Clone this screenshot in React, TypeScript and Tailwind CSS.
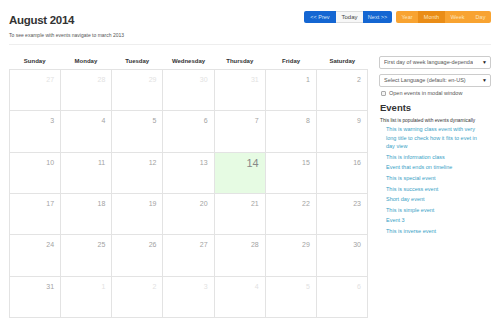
const FONT = { fontFamily: '"Liberation Sans", Arial, sans-serif' };

const days = ["Sunday", "Monday", "Tuesday", "Wednesday", "Thursday", "Friday", "Saturday"];

type Cell = { n: number; out?: boolean; today?: boolean };

const weeks: Cell[][] = [
  [{ n: 27, out: true }, { n: 28, out: true }, { n: 29, out: true }, { n: 30, out: true }, { n: 31, out: true }, { n: 1 }, { n: 2 }],
  [{ n: 3 }, { n: 4 }, { n: 5 }, { n: 6 }, { n: 7 }, { n: 8 }, { n: 9 }],
  [{ n: 10 }, { n: 11 }, { n: 12 }, { n: 13 }, { n: 14, today: true }, { n: 15 }, { n: 16 }],
  [{ n: 17 }, { n: 18 }, { n: 19 }, { n: 20 }, { n: 21 }, { n: 22 }, { n: 23 }],
  [{ n: 24 }, { n: 25 }, { n: 26 }, { n: 27 }, { n: 28 }, { n: 29 }, { n: 30 }],
  [{ n: 31 }, { n: 1, out: true }, { n: 2, out: true }, { n: 3, out: true }, { n: 4, out: true }, { n: 5, out: true }, { n: 6, out: true }],
];

const events = [
  "This is warning class event with very long title to check how it fits to evet in day view",
  "This is information class",
  "Event that ends on timeline",
  "This is special event",
  "This is success event",
  "Short day event",
  "This is simple event",
  "Event 3",
  "This is inverse event",
];

export default function App() {
  return (
    <div className="h-[332px] w-[500px] overflow-hidden bg-white pl-[9px] pr-[9px] text-[#333]" style={FONT}>
      <div className="flex items-start justify-between pt-[11px]">
        <h3 className="mt-[2px] text-[11.5px] font-bold leading-[14px] tracking-[-0.3px]">August 2014</h3>
        <div className="flex gap-[4px]">
          <Nav />
          <Views />
        </div>
      </div>
      <p className="mt-[5px] text-[5px] leading-[6px] text-[#555]">
        To see example with events navigate to march 2013
      </p>
      <div className="mt-[6px] h-px w-[482px] bg-[#eee]" />

      <div className="mt-[9px] flex gap-[11px]">
        <Calendar />
        <Sidebar />
      </div>
    </div>
  );
}

function Nav() {
  return (
    <div className="flex h-[12px] text-[5.5px] leading-[12px]">
      <span className="w-[32px] rounded-l-[2px] bg-[#1466d2] text-center text-[#dbe8fa]">&lt;&lt; Prev</span>
      <span className="w-[27px] border-y border-[#ddd] bg-[#f7f7f7] text-center text-[6px] leading-[10px] text-[#444]">Today</span>
      <span className="w-[29px] rounded-r-[2px] bg-[#1466d2] text-center text-[#dbe8fa]">Next &gt;&gt;</span>
    </div>
  );
}

function Views() {
  return (
    <div className="flex h-[12px] text-[5.5px] leading-[12px] text-[#fde4bd]">
      <span className="w-[22px] rounded-l-[2px] bg-[#f8a331] text-center">Year</span>
      <span className="w-[27px] bg-[#ea8d17] text-center">Month</span>
      <span className="w-[25px] bg-[#f8a331] text-center">Week</span>
      <span className="w-[21px] rounded-r-[2px] bg-[#f8a331] text-center">Day</span>
    </div>
  );
}

function Calendar() {
  return (
    <div className="w-[359px]">
      <div className="grid h-[15px] grid-cols-7 text-center text-[6px] font-bold leading-[15px]">
        {days.map((d) => (
          <span key={d}>{d}</span>
        ))}
      </div>
      <div className="grid h-[249px] grid-rows-6 border-l border-t border-[#e3e3e3]">
        {weeks.map((w, i) => (
          <div key={i} className="grid grid-cols-7">
            {w.map((c, j) => (
              <div
                key={j}
                className={
                  "border-b border-r border-[#e3e3e3] pr-[6px] text-right " +
                  (c.today ? "bg-[#e6fbe3] pt-[4px] text-[11px] leading-[12px] text-[#888]" : "pt-[6px] text-[7px] leading-[8px]") +
                  (c.out ? " text-[#e2e2e2]" : c.today ? "" : " text-[#a3a3a3]")
                }
              >
                {c.n}
              </div>
            ))}
          </div>
        ))}
      </div>
    </div>
  );
}

function Select({ label }: { label: string }) {
  return (
    <div className="flex h-[13px] w-[112px] items-center justify-between rounded-[2px] border border-[#ccc] pl-[4px] pr-[3px] text-[5.5px] text-[#555]">
      <span className="truncate">{label}</span>
      <span className="text-[5px] text-[#222]">▼</span>
    </div>
  );
}

function Sidebar() {
  return (
    <div className="w-[112px] pt-[2px]">
      <Select label="First day of week language-dependa" />
      <div className="mt-[5px]">
        <Select label="Select Language (default: en-US)" />
      </div>
      <label className="mt-[2px] flex items-center gap-[3px] pl-[2px] text-[5.5px] leading-[8px] text-[#555]">
        <span className="h-[5px] w-[5px] rounded-[1px] border border-[#aaa] bg-[#f4f4f4]" />
        Open events in modal window
      </label>
      <h4 className="mt-[5px] pl-[1px] text-[9.5px] font-bold leading-[12px] text-[#333]">Events</h4>
      <p className="mt-[3px] pl-[1px] text-[4.8px] leading-[7px] text-[#333]">
        This list is populated with events dynamically
      </p>
      <ul className="mt-[1px] pl-[7px] pr-[9px] text-[5.5px] leading-[8.6px] text-[#3a9fc6]">
        {events.map((e) => (
          <li key={e} className="mb-[2px]">
            {e}
          </li>
        ))}
      </ul>
    </div>
  );
}
